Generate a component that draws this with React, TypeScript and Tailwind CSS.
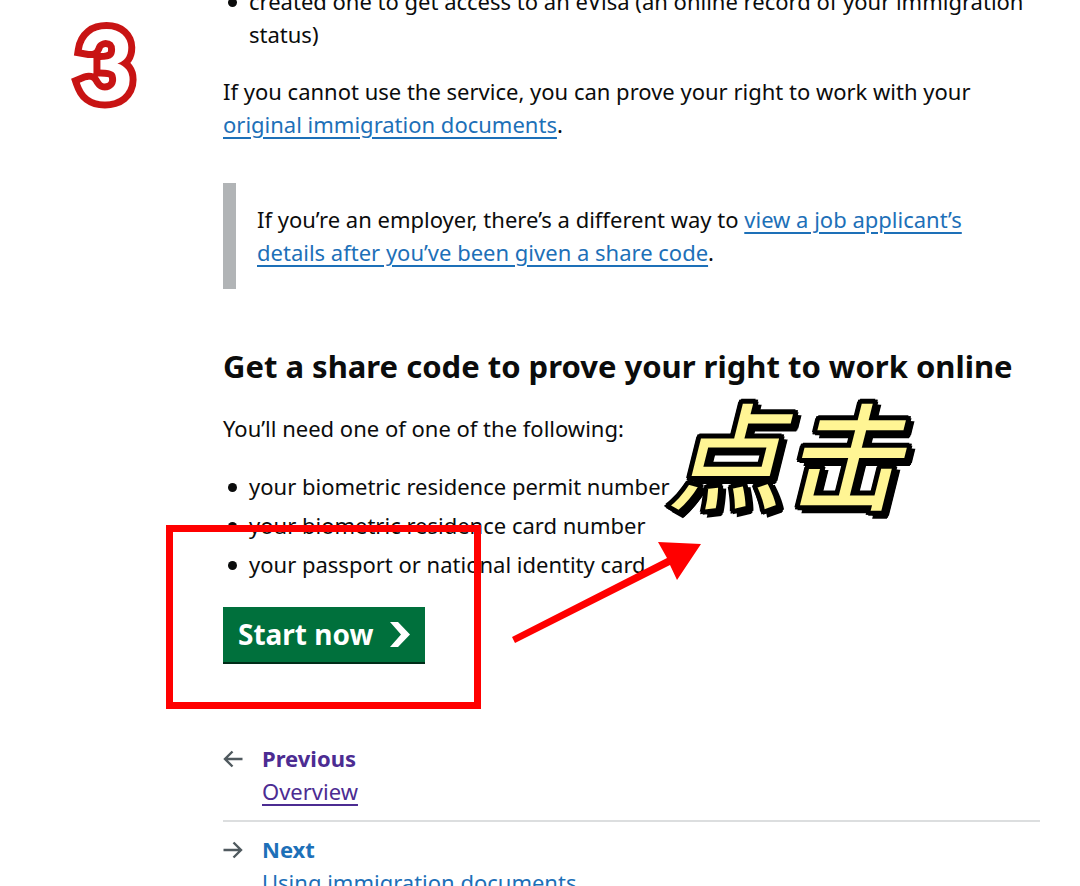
import type { ReactNode } from "react";

const documents = [
  "your biometric residence permit number",
  "your biometric residence card number",
  "your passport or national identity card",
];

function TextLink({ href, children }: { href: string; children: ReactNode }) {
  return (
    <a
      href={href}
      className="text-[#1d70b8] underline decoration-2 underline-offset-4"
    >
      {children}
    </a>
  );
}

function BulletItem({ children }: { children: ReactNode }) {
  return (
    <li className="flex">
      <span className="mt-[13px] mr-[12px] ml-[5px] size-[9px] shrink-0 rounded-full bg-[#0b0c0c]" />
      <span>{children}</span>
    </li>
  );
}

function Arrow({ direction }: { direction: "left" | "right" }) {
  return (
    <svg
      viewBox="0 0 20 18"
      className="mt-[8px] h-[18px] w-[20px] shrink-0"
      fill="none"
      stroke="#505a5f"
      strokeWidth="2.4"
      aria-hidden="true"
    >
      {direction === "left" ? (
        <path d="M19.5 9H2M9.5 1.5L2 9l7.5 7.5" />
      ) : (
        <path d="M.5 9H18M10.5 1.5L18 9l-7.5 7.5" />
      )}
    </svg>
  );
}

function Annotations() {
  return (
    <div className="pointer-events-none">
      <span className="absolute top-[3px] left-[77px] font-['Lato','Liberation_Sans',sans-serif] text-[98px] leading-[120px] font-black text-white [-webkit-text-stroke:14px_#c81414] [paint-order:stroke_fill]">
        3
      </span>

      <div className="absolute top-[525px] left-[166px] h-[184px] w-[315px] border-[7px] border-[#ff0000]" />

      <svg
        viewBox="0 0 200 110"
        className="absolute top-[535px] left-[505px] h-[110px] w-[200px]"
        fill="#ff0000"
        aria-hidden="true"
      >
        <path d="M7 102L162 23L153 7L196 9L172 45L165 30L10 108Z" />
      </svg>

      <span className="absolute top-[385px] left-[665px] font-['Noto_Sans_CJK_SC',sans-serif] text-[118px] leading-[132px] font-bold whitespace-nowrap text-[#fff594] italic [-webkit-text-stroke:4px_black] [text-shadow:3px_0_black,-3px_0_black,0_3px_black,0_-3px_black,2px_2px_black,-2px_2px_black,2px_-2px_black,-2px_-2px_black,4px_3px_black,6px_3px_black,4px_6px_black,5px_5px_black]">
        点击
      </span>
    </div>
  );
}

export default function App() {
  return (
    <div className="relative overflow-hidden bg-white font-['Noto_Sans','Noto_Sans_CJK_SC',sans-serif] text-[22px] leading-[33px] text-[#0b0c0c]">
      <main className="-mt-[15px] pr-[40px] pl-[223px]">
        <ul>
          <BulletItem>
            created one to get access to an eVisa (an online record of your
            immigration status)
          </BulletItem>
        </ul>

        <p className="mt-[24px]">
          If you cannot use the service, you can prove your right to work with
          your <br />
          <TextLink href="#documents">original immigration documents</TextLink>.
        </p>

        <div className="mt-[42px] border-l-[13px] border-[#b1b4b6] py-[20px] pl-[21px]">
          <p>
            If you’re an employer, there’s a different way to{" "}
            <TextLink href="#employer">
              view a job applicant’s <br />
              details after you’ve been given a share code
            </TextLink>
            .
          </p>
        </div>

        <h2 className="mt-[59px] text-[31px] leading-[36px] font-bold">
          Get a share code to prove your right to work online
        </h2>

        <p className="mt-[28px]">You’ll need one of one of the following:</p>

        <ul className="mt-[25px] space-y-[6px]">
          {documents.map((item) => (
            <BulletItem key={item}>{item}</BulletItem>
          ))}
        </ul>

        <button
          type="button"
          className="mt-[26px] flex h-[55px] items-center gap-[17px] bg-[#00703c] px-[15px] text-[28px] font-bold text-white shadow-[0_2px_0_#002d18]"
        >
          Start now
          <svg
            viewBox="0 0 20 25"
            className="h-[25px] w-[20px]"
            fill="currentColor"
            aria-hidden="true"
          >
            <path d="M0 0H8L20 12.5L8 25H0L11 12.5Z" />
          </svg>
        </button>

        <nav className="mt-[80px]" aria-label="Pagination">
          <a
            href="#overview"
            className="flex gap-[19px] border-b-2 border-[#dcdedf] pb-[12px] text-[#4c2c92]"
          >
            <Arrow direction="left" />
            <span>
              <span className="block font-bold">Previous</span>
              <span className="underline decoration-2 underline-offset-4">
                Overview
              </span>
            </span>
          </a>
          <a href="#next" className="flex gap-[19px] pt-[11px] text-[#1d70b8]">
            <Arrow direction="right" />
            <span>
              <span className="block font-bold">Next</span>
              <span className="underline decoration-2 underline-offset-4">
                Using immigration documents
              </span>
            </span>
          </a>
        </nav>
      </main>

      <Annotations />
    </div>
  );
}
